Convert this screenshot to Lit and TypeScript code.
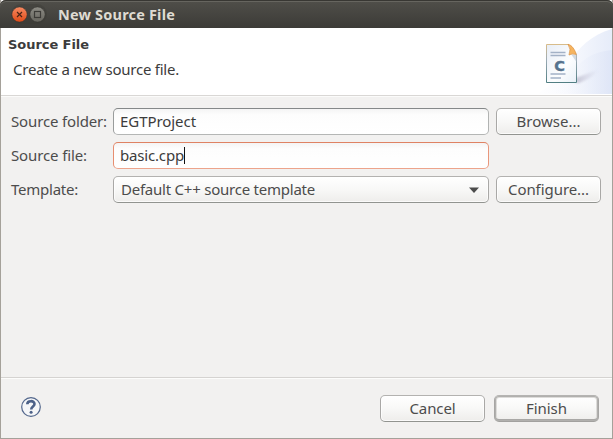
import { LitElement, html, css, svg } from "lit";
import { customElement, property } from "lit/decorators.js";

/** A line of text tracked so that it fills a given width. */
@customElement("fit-text")
class FitText extends LitElement {
  @property() text = "";
  @property({ type: Number }) width = 0;
  static styles = css`
    :host { display: inline-block; white-space: pre; }
    span { display: inline-block; }
  `;
  updated() {
    const el = this.renderRoot.querySelector("span") as HTMLElement;
    el.style.letterSpacing = "0px";
    const natural = el.getBoundingClientRect().width;
    const step = (this.width - natural) / this.text.length;
    el.style.letterSpacing = `${step}px`;
  }
  render() {
    return html`<span>${this.text}</span>`;
  }
}

@customElement("app-root")
class AppRoot extends LitElement {
  static styles = css`
    :host { display: block; width: 613px; height: 439px; background: #55544f; overflow: hidden; }
    * { box-sizing: border-box; }
    .window {
      width: 613px; height: 439px; display: flex; flex-direction: column;
      font: 15px/20px "Noto Sans", sans-serif; color: #4c4c4c; background: #f2f1f0;
      border: solid #a5a19a; border-width: 0 1px 1px;
    }
    .title {
      height: 28px; margin: 0 -1px; flex: none; display: flex; align-items: center; padding: 0 0 0 11px;
      background: linear-gradient(#504f4a, #3c3b37); border-radius: 6px 6px 0 0;
      box-shadow: inset 0 1px #383733, inset 0 2px #66655f;
      color: #dfdbd2; font-weight: 700; font-size: 14.5px;
    }
    .title svg { width: 36px; height: 20px; display: block; }
    .title fit-text { margin: -1px 0 0 11px; }
    .header {
      height: 67px; flex: none; display: flex; justify-content: space-between;
      background: #fff; color: #3c3c3c;
    }
    .heading { display: block; font: 700 13px/14px "DejaVu Sans", sans-serif; padding: 10px 0 0 7px; }
    .sub { display: block; padding: 7px 0 0 12px; }
    .header svg { width: 100px; height: 67px; display: block; }
    .body {
      flex: 1; display: grid; grid-template-columns: 95px 376px 105px; grid-auto-rows: 27px;
      gap: 7px; align-items: center; padding: 12px 0 0 10px;
      border-top: 1px solid #d9d7d5; box-shadow: inset 0 1px #fbfbfa;
    }
    .body fit-text { padding-bottom: 2px; }
    .field, .button {
      height: 27px; border: 1px solid #aaa9a7; border-radius: 5px; display: flex; align-items: center;
    }
    .field {
      color: #3c3c3c; padding-left: 6px; border-color: #858889 #b1b3b2 #b4b6b5 #999c9c;
      background: linear-gradient(#f4f4f4, #fdfdfd 6px, #fff);
    }
    .focus { border-color: #df8263 #e9977c #eda48c #e78e70; grid-column: 2 / 4; width: 376px; }
    .caret { width: 1px; height: 17px; background: #111; }
    .button {
      justify-content: center; border-color: #b3b2b0 #a9a8a6 #929490 #a9a8a6;
      background: linear-gradient(#fff, #f8f8f7 50%, #eeedeb); box-shadow: inset 0 0 0 1px #fffb;
    }
    .combo { justify-content: space-between; padding: 0 9px 0 7px; }
    .combo svg { width: 10px; height: 6px; display: block; }
    .footer {
      height: 61px; flex: none; display: flex; align-items: center; padding: 0 13px 2px 20px;
      border-top: 1px solid #d5d3d1; box-shadow: inset 0 1px #fcfcfb;
    }
    .footer svg { width: 20px; height: 20px; margin-right: auto; }
    .footer .button { width: 105px; margin: 2px 0 0 9px; }
    .finish { border-color: #b5b4b2 #a7a6a4 #a2a19f; box-shadow: inset 0 0 0 1px #b1b0ae, inset 0 -2px #a9a8a6, inset 0 0 0 2px #dddcda; }
  `;

  private fit(text: string, width: number) {
    return html`<fit-text .text=${text} .width=${width}></fit-text>`;
  }

  private controls() {
    return svg`
      <defs>
        <linearGradient id="close" x2="0" y2="1"><stop stop-color="#f68a62"/><stop offset="1" stop-color="#df4a17"/></linearGradient>
        <linearGradient id="max" x2="0" y2="1"><stop stop-color="#8d8c85"/><stop offset="1" stop-color="#66655e"/></linearGradient>
      </defs>
      <rect width="36" height="20" rx="10" fill="#393834" opacity=".35"/>
      <circle cx="8.5" cy="10.5" r="7.6" fill="url(#close)" stroke="#34332e" stroke-width=".5"/>
      <path d="M6 8l5 5M11 8l-5 5" stroke="#4a2416" stroke-width="1.2"/>
      <circle cx="26.5" cy="10.5" r="7.6" fill="url(#max)" stroke="#34332e" stroke-width=".5"/>
      <rect x="23.5" y="7.5" width="6" height="6" fill="none" stroke="#3c3b37" stroke-width="1.2"/>`;
  }

  private banner() {
    return svg`
      <defs>
        <linearGradient id="sweep"><stop stop-color="#fff"/><stop offset=".4" stop-color="#f9fafe"/><stop offset="1" stop-color="#e6ecf9"/></linearGradient>
        <linearGradient id="sweep2"><stop stop-color="#fff" stop-opacity="0"/><stop offset="1" stop-color="#d9e1f5"/></linearGradient>
        <linearGradient id="page" x2="1" y2="1"><stop stop-color="#e8eef7"/><stop offset=".6" stop-color="#fcfdfe"/><stop offset="1" stop-color="#e9f1f8"/></linearGradient>
        <linearGradient id="edge" x2="0" y2="1"><stop stop-color="#d8bc8a"/><stop offset=".4" stop-color="#9cabb5"/><stop offset="1" stop-color="#527f83"/></linearGradient>
        <linearGradient id="shade"><stop stop-color="#9996ad" stop-opacity=".5"/><stop offset="1" stop-color="#b9b8d0" stop-opacity="0"/></linearGradient>
        <filter id="soft" x="-20%" y="-40%" width="140%" height="180%"><feGaussianBlur stdDeviation="1"/></filter>
      </defs>
      <path d="M24 66C54 54 57 13 100 1V66Z" fill="url(#sweep)"/>
      <path d="M34 66C59 58 60 25 100 22V66Z" fill="url(#sweep2)" opacity=".6"/>
      <path d="M64 55V50L87 41Q83 49 67 55Z" fill="url(#shade)" filter="url(#soft)"/>
      <path d="M34.5 16.5H56.5L64.5 26.5V54.5H34.5Z" fill="url(#page)" stroke="url(#edge)"/>
      <path d="M59 26l5.500 1v7z" fill="#b8c3ce" opacity=".6"/>
      <path d="M56 16.300C60 17 63 22 64.300 26.500Q60 25 57 27Q59.500 21 56 16.300Z" fill="#f6b45f" stroke="#db9140" stroke-width=".7"/>
      <path d="M38.500 24.500H53.500M38.500 27.500H53.500M38.500 46H53.500M38.500 50H49" stroke="#a3b1c6" stroke-width="1.300"/>
      <text x="42.300" y="42.600" font-family="DejaVu Sans" font-size="14.500" font-weight="700" fill="#56728d" stroke="#56728d" stroke-width=".4">C</text>`;
  }

  render() {
    return html`
      <div class="window">
        <div class="title"><svg viewBox="0 0 36 20">${this.controls()}</svg>${this.fit("New Source File", 117)}</div>
        <div class="header">
          <div>
            <div class="heading">${this.fit("Source File", 81)}</div>
            <div class="sub">${this.fit("Create a new source file.", 166)}</div>
          </div>
          <svg viewBox="0 0 100 67">${this.banner()}</svg>
        </div>
        <div class="body">
          ${this.fit("Source folder:", 96)}
          <div class="field">${this.fit("EGTProject", 76)}</div>
          <div class="button">${this.fit("Browse...", 64)}</div>
          ${this.fit("Source file:", 76)}
          <div class="field focus">${this.fit("basic.cpp", 64)}<i class="caret"></i></div>
          ${this.fit("Template:", 67)}
          <div class="button combo">
            ${this.fit("Default C++ source template", 194)}
            <svg viewBox="0 0 10 6"><path d="M0 .5H10L5 6Z" fill="#4c4c4c"/></svg>
          </div>
          <div class="button">${this.fit("Configure...", 81)}</div>
        </div>
        <div class="footer">
          <svg viewBox="0 0 20 20">
            <circle cx="10" cy="10" r="9.3" fill="#f5f6f8" stroke="#53678c" stroke-width="1.2"/>
            <path d="M6.300 7.200C6.300 3.200 13.500 3.200 13.500 7C13.500 9.500 10.200 9.500 10.200 12.500" fill="none" stroke="#4c6188" stroke-width="2.600"/>
            <circle cx="10.100" cy="15.300" r="1.500" fill="#4c6188"/>
          </svg>
          <div class="button">${this.fit("Cancel", 46)}</div>
          <div class="button finish">${this.fit("Finish", 41)}</div>
        </div>
      </div>`;
  }
}
